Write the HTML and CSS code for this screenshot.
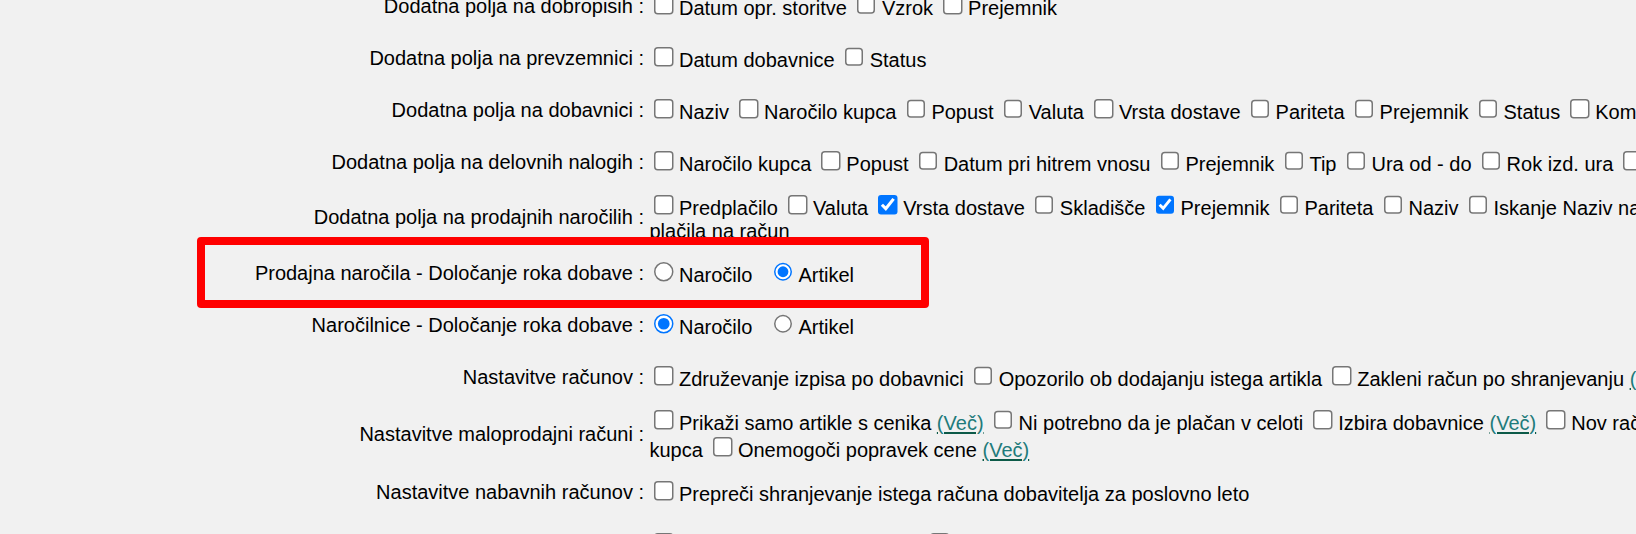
FILE: index.html
```html
<!DOCTYPE html>
<html lang="sl">
<head>
<meta charset="utf-8">
<title>Nastavitve</title>
<link rel="stylesheet" href="styles.css">
</head>
<body>
<div class="page">
  <div class="form">
    <div class="row">
      <div class="lbl">Dodatna polja na dobropisih :</div>
      <div class="val">
        <label class="opt"><input class="cb" type="checkbox">Datum opr. storitve</label>
        <label class="opt"><input class="cb" type="checkbox">Vzrok</label>
        <label class="opt"><input class="cb" type="checkbox">Prejemnik</label>
      </div>
    </div>
    <div class="row">
      <div class="lbl">Dodatna polja na prevzemnici :</div>
      <div class="val">
        <label class="opt"><input class="cb" type="checkbox">Datum dobavnice</label>
        <label class="opt"><input class="cb" type="checkbox">Status</label>
      </div>
    </div>
    <div class="row">
      <div class="lbl">Dodatna polja na dobavnici :</div>
      <div class="val">
        <label class="opt"><input class="cb" type="checkbox">Naziv</label>
        <label class="opt"><input class="cb" type="checkbox">Naročilo kupca</label>
        <label class="opt"><input class="cb" type="checkbox">Popust</label>
        <label class="opt"><input class="cb" type="checkbox">Valuta</label>
        <label class="opt"><input class="cb" type="checkbox">Vrsta dostave</label>
        <label class="opt"><input class="cb" type="checkbox">Pariteta</label>
        <label class="opt"><input class="cb" type="checkbox">Prejemnik</label>
        <label class="opt"><input class="cb" type="checkbox">Status</label>
        <label class="opt"><input class="cb" type="checkbox">Komentar</label>
      </div>
    </div>
    <div class="row">
      <div class="lbl">Dodatna polja na delovnih nalogih :</div>
      <div class="val">
        <label class="opt"><input class="cb" type="checkbox">Naročilo kupca</label>
        <label class="opt"><input class="cb" type="checkbox">Popust</label>
        <label class="opt"><input class="cb" type="checkbox">Datum pri hitrem vnosu</label>
        <label class="opt"><input class="cb" type="checkbox">Prejemnik</label>
        <label class="opt"><input class="cb" type="checkbox">Tip</label>
        <label class="opt"><input class="cb" type="checkbox">Ura od - do</label>
        <label class="opt"><input class="cb" type="checkbox">Rok izd. ura</label>
        <label class="opt"><input class="cb" type="checkbox">Kontakt</label>
      </div>
    </div>
    <div class="row">
      <div class="lbl">Dodatna polja na prodajnih naročilih :</div>
      <div class="val">
        <label class="opt"><input class="cb" type="checkbox">Predplačilo</label>
        <label class="opt"><input class="cb" type="checkbox">Valuta</label>
        <label class="opt"><input class="cb" type="checkbox" checked>Vrsta dostave</label>
        <label class="opt"><input class="cb" type="checkbox">Skladišče</label>
        <label class="opt"><input class="cb" type="checkbox" checked>Prejemnik</label>
        <label class="opt"><input class="cb" type="checkbox">Pariteta</label>
        <label class="opt"><input class="cb" type="checkbox">Naziv</label>
        <label class="opt"><input class="cb" type="checkbox">Iskanje Naziv na dobavnici</label>
        <label class="opt"><input class="cb" type="checkbox">Način</label><br>plačila na račun
      </div>
    </div>
    <div class="row">
      <div class="lbl">Prodajna naročila - Določanje roka dobave :</div>
      <div class="val">
        <label class="opt spaced"><input class="rb" type="radio" name="rok1">Naročilo</label>
        <label class="opt"><input class="rb" type="radio" name="rok1" checked>Artikel</label>
      </div>
    </div>
    <div class="row">
      <div class="lbl">Naročilnice - Določanje roka dobave :</div>
      <div class="val">
        <label class="opt spaced"><input class="rb" type="radio" name="rok2" checked>Naročilo</label>
        <label class="opt"><input class="rb" type="radio" name="rok2">Artikel</label>
      </div>
    </div>
    <div class="row">
      <div class="lbl">Nastavitve računov :</div>
      <div class="val">
        <label class="opt"><input class="cb" type="checkbox">Združevanje izpisa po dobavnici</label>
        <label class="opt"><input class="cb" type="checkbox">Opozorilo ob dodajanju istega artikla</label>
        <label class="opt"><input class="cb" type="checkbox">Zakleni račun po shranjevanju</label>
        <a class="more" href="#">(Več)</a>
      </div>
    </div>
    <div class="row">
      <div class="lbl">Nastavitve maloprodajni računi :</div>
      <div class="val">
        <label class="opt"><input class="cb" type="checkbox">Prikaži samo artikle s cenika</label>
        <a class="more" href="#">(Več)</a>
        <label class="opt"><input class="cb" type="checkbox">Ni potrebno da je plačan v celoti</label>
        <label class="opt"><input class="cb" type="checkbox">Izbira dobavnice</label>
        <a class="more" href="#">(Več)</a>
        <label class="opt"><input class="cb" type="checkbox">Nov račun za istega</label><br>kupca
        <label class="opt"><input class="cb" type="checkbox">Onemogoči popravek cene</label>
        <a class="more" href="#">(Več)</a>
      </div>
    </div>
    <div class="row">
      <div class="lbl">Nastavitve nabavnih računov :</div>
      <div class="val">
        <label class="opt"><input class="cb" type="checkbox">Prepreči shranjevanje istega računa dobavitelja za poslovno leto</label>
      </div>
    </div>
    <div class="row">
      <div class="lbl">Nastavitve izpisov :</div>
      <div class="val">
        <label class="opt"><input class="cb" type="checkbox">Samodejni izračun popusta</label>
        <label class="opt"><input class="cb" type="checkbox">Prikaži zalogo</label>
      </div>
    </div>
  </div>
  <div class="highlight"></div>
</div>
</body>
</html>
```

FILE: styles.css
```css
html, body {
  margin: 0;
  height: 100%;
  overflow: hidden;
  background: #f1f1f1;
}

body {
  font-family: "Liberation Sans", Arial, sans-serif;
  font-size: 20px;
  color: #000;
}

.page {
  position: relative;
  display: flow-root;
}

.form {
  margin-top: -20px;
}

.row {
  display: grid;
  grid-template-columns: 644px 1fr;
  align-items: center;
  min-height: 52px;
  box-sizing: border-box;
  padding: 4.5px 0;
}

.lbl {
  text-align: right;
  white-space: nowrap;
}

.val {
  padding-left: 5.5px;
  white-space: nowrap;
}

/* native controls rendered at 150% like the source page */
.cb {
  zoom: 1.5;
  width: 13px;
  height: 13px;
  margin: 1.67px 3.6px 0 3.07px;
}

.rb {
  zoom: 1.5;
  width: 13px;
  height: 13px;
  margin: 1.67px 3.6px 1px 3.07px;
}

.spaced {
  margin-right: 11px;
}

.more {
  color: #1f7b7b;
  text-decoration: underline;
  text-decoration-color: #0c5a48;
  text-decoration-thickness: 2px;
  text-underline-offset: 2px;
}

.highlight {
  position: absolute;
  left: 197px;
  top: 237px;
  width: 732px;
  height: 71px;
  box-sizing: border-box;
  border: 8px solid #ff0000;
  border-radius: 4px;
}
```
